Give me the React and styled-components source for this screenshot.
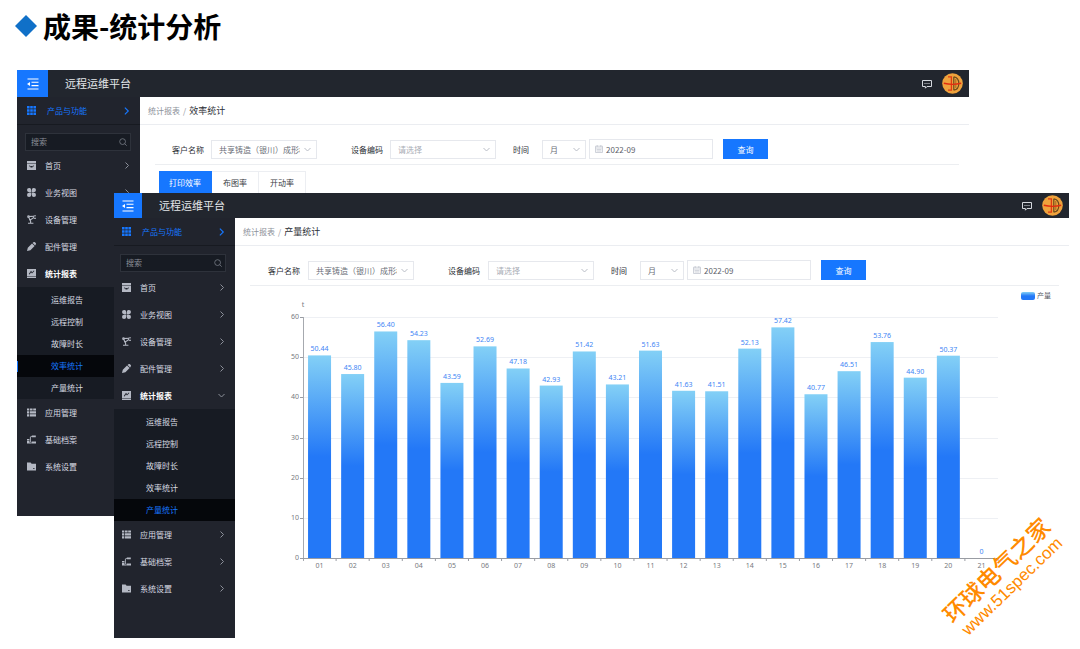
import React, { useId } from 'react';
import styled, { createGlobalStyle, css } from 'styled-components';

const GlobalStyle = createGlobalStyle`
    * {
        box-sizing: border-box;
    }
    body {
        margin: 0;
        background: #ffffff;
        font-family: 'Noto Sans CJK SC', sans-serif;
    }
    button, input, select {
        font-family: inherit;
    }
    a {
        color: inherit;
        text-decoration: none;
    }
`;

const Slide = styled.main`
    position: relative;
    min-height: 100vh;
    overflow: hidden;
    padding: 6px 11px 0 17px;
`;

const SlideTitle = styled.h1`
    display: flex;
    align-items: center;
    gap: 6px;
    height: 40px;
    margin: 0 0 24px;
    font-size: 28px;
    font-weight: 700;
    line-height: 40px;
    color: #000000;

    svg {
        flex: none;
        width: 22px;
        height: 22px;
        margin-left: -2px;
    }
`;

const Stage = styled.div`
    display: grid;
    grid-template-columns: minmax(0, 1fr);
    align-items: start;
`;

const Window = styled.section`
    grid-area: 1 / 1;
    background: #ffffff;
    margin: ${(p) => (p.$front ? '123px 0 0 97px' : '0 100px 0 0')};
`;

const TopBar = styled.header`
    display: flex;
    align-items: center;
    height: ${(p) => (p.$front ? 25 : 27)}px;
    padding-right: 6px;
    background: #22262e;
    color: #e4e6ea;
`;

const Toggle = styled.button`
    display: flex;
    align-items: center;
    justify-content: center;
    width: ${(p) => (p.$front ? 28 : 31)}px;
    height: 100%;
    padding: 0;
    border: 0;
    background: #1677ff;
    color: #ffffff;
`;

const AppName = styled.h2`
    flex: 1;
    margin: 0 0 0 17px;
    padding-bottom: 2px;
    font-size: 11px;
    font-weight: 400;
    line-height: 16px;
`;

const IconButton = styled.button`
    display: flex;
    margin: 2px 10px 0 0;
    padding: 0;
    border: 0;
    background: none;
    color: #d5d8de;
`;

const Body = styled.div`
    display: grid;
    grid-template-columns: ${(p) => (p.$front ? 121 : 123)}px minmax(0, 1fr);
`;

const Sidebar = styled.nav`
    padding-bottom: 36px;
    background: #21242d;
    color: #d8dbe2;
    font-size: 8px;
    line-height: 12px;
`;

const row = css`
    display: flex;
    align-items: center;
    padding: 0 10px 0 ${(p) => (p.$front ? 8 : 10)}px;
`;

const Product = styled.a`
    ${row}
    gap: 11px;
    height: 28px;
    border-bottom: 1px solid #171a21;
    color: #1677ff;

    span {
        flex: 1;
    }
`;

const Search = styled.label`
    display: flex;
    align-items: center;
    height: 18px;
    margin: ${(p) => (p.$front ? '8px 9px 2px 6px' : '8px 9px 1px 8px')};
    padding: 0 3px 0 5px;
    border: 1px solid #2e323b;
    background: #171b23;
    color: #777c86;

    input {
        flex: 1;
        min-width: 0;
        padding: 0;
        border: 0;
        outline: 0;
        background: none;
        color: #d8dbe2;
        font-size: 8px;
        line-height: 12px;
    }
    input::placeholder {
        color: #8b8f98;
    }
`;

const MenuItem = styled.a`
    ${row}
    gap: 9px;
    height: 27px;
    font-weight: ${(p) => (p.$open ? 700 : 400)};
    color: ${(p) => (p.$open ? '#ffffff' : '#d8dbe2')};

    span {
        flex: 1;
    }
    svg:first-child {
        color: #b4b8c3;
    }
    svg:last-child {
        color: #8c909a;
    }
`;

const SubMenu = styled.div`
    padding-top: 2px;
    background: #171b23;
`;

const SubItem = styled.a`
    display: flex;
    align-items: center;
    height: 22px;
    padding-left: ${(p) => (p.$front ? 32 : 34)}px;

    ${(p) =>
        p.$active &&
        css`
            background: #05070b;
            color: #1677ff;
        `}
    ${(p) =>
        p.$active &&
        !p.$front &&
        css`
            background: linear-gradient(#1677ff, #1677ff) 0 50% / 1px 11px no-repeat #05070b;
        `}
`;

const Content = styled.div`
    min-width: 0;
`;

const Crumbs = styled.div`
    display: flex;
    align-items: center;
    gap: 3px;
    height: 28px;
    padding-left: 8px;
    border-bottom: 1px solid #ebedf1;
    font-size: 8px;
    color: #8d919a;

    strong {
        font-size: 9px;
        font-weight: 400;
        color: #2c2f36;
    }
`;

const Filters = styled.form`
    display: flex;
    align-items: center;
    height: 40px;
    margin: 0 10px 0 15px;
    padding: 9px 0 0 ${(p) => (p.$front ? 18 : 17)}px;
    border-bottom: 1px solid #eceef1;
    font-size: 8px;
    color: #2c2f36;
`;

const Field = styled.div`
    display: flex;
    align-items: center;
    gap: ${(p) => p.$gap}px;
    margin-right: ${(p) => p.$after}px;

    label {
        white-space: nowrap;
    }
`;

const SelectBox = styled.span`
    display: grid;
    align-items: center;
    width: ${(p) => p.$width}px;
    height: 19px;
    border: 1px solid #e6e8ed;
    background: #ffffff;
    color: #b9bdc6;

    select {
        grid-area: 1 / 1;
        appearance: none;
        width: 100%;
        height: 17px;
        padding: 0 16px 0 7px;
        border: 0;
        outline: 0;
        background: none;
        font-size: 8px;
        color: ${(p) => (p.$empty ? '#a9adb6' : '#6a6e77')};
    }
    svg {
        grid-area: 1 / 1;
        justify-self: end;
        margin-right: 5px;
        pointer-events: none;
    }
`;

const DateBox = styled.span`
    display: flex;
    align-items: center;
    gap: 3px;
    width: 124px;
    height: 20px;
    margin: 0 10px 0 3px;
    padding: 0 5px;
    border: 1px solid #e6e8ed;
    color: #c3c7d0;

    input {
        flex: 1;
        min-width: 0;
        padding: 0;
        border: 0;
        outline: 0;
        font-size: 8px;
        color: #5d616a;
    }
`;

const Submit = styled.button`
    width: 45px;
    height: 20px;
    padding: 0;
    border: 0;
    background: #1677ff;
    color: #ffffff;
    font-size: 8px;
`;

const Tabs = styled.div`
    display: flex;
    margin: 6px 0 0 19px;
`;

const Tab = styled.button`
    width: ${(p) => (p.$active ? 53 : 47)}px;
    height: 23px;
    padding: 0;
    border: 1px solid #eceef2;
    border-left: 0;
    background: #ffffff;
    color: #3a3d44;
    font-size: 8px;

    ${(p) =>
        p.$active &&
        css`
            border-color: #1677ff;
            background: #1677ff;
            color: #ffffff;
        `}
`;

const ChartSvg = styled.svg`
    display: block;
    width: 100%;
    height: auto;
    font-family: 'Noto Sans', sans-serif;
    font-size: 7px;
`;

const Watermark = styled.div`
    position: absolute;
    right: 4px;
    top: 554px;
    width: 144px;
    color: #ff8a00;
    font-size: 23px;
    line-height: 24px;
    text-align: center;
    white-space: nowrap;
    transform: rotate(-44deg);

    a {
        display: block;
        font-family: 'Liberation Sans', sans-serif;
        font-size: 17px;
    }
    span {
        display: block;
        font-weight: 500;
    }
`;

const GLYPHS = {
    grid: <path d="M0 0h2.6v2.6H0zM3.2 0h2.6v2.6H3.2zM6.4 0H9v2.6H6.4zM0 3.2h2.6v2.6H0zM3.2 3.2h2.6v2.6H3.2zM6.4 3.2H9v2.6H6.4zM0 6.4h2.6V9H0zM3.2 6.4h2.6V9H3.2zM6.4 6.4H9V9H6.4z" />,
    home: <path fillRule="evenodd" d="M0 0h9v2.4H0zM0 3h9v6H0zM2.2 4.6v1h1.3v.8h2v-.8h1.3v-1h-.9v.5H3.1v-.5z" />,
    views: <path d="M2.1 0A2 2 0 0 1 4.2 2.1V4.2H2.1A2.1 2.1 0 0 1 2.1 0zM6.9 0a2.1 2.1 0 0 1 0 4.2H4.8V2.1A2 2 0 0 1 6.9 0zM2.1 4.8h2.1v2.1A2.1 2.1 0 1 1 2.1 4.8zM4.8 4.8h2.1a2.1 2.1 0 1 1-2.1 2.1z" />,
    robot: (
        <g fill="none" stroke="currentColor" strokeWidth="1.1">
            <path d="M1 8.3h5.4M3.6 8V5.800L1.600 2.200M1.500 1.500 5.800 1.200M8.900.8 6.800 1 6.200 2l.8 1.200 1.900.2M2.400 5.400l3.600-2.200" />
            <circle cx="1.500" cy="1.700" r=".8" />
        </g>
    ),
    pen: <path d="M0 9l.8-3.2L5 1.6l2.6 2.4-4.2 4.2zM5.6 1 6.4.3a1.2 1.2 0 0 1 1.6 0l.7.7a1.2 1.2 0 0 1 0 1.6l-.6.8z" />,
    report: <path fillRule="evenodd" d="M0 0h9v7H0zM0 7.6h9V9H0zM1.8 5l.9.4L4 3.2l1 1.4L7.4 2l-.6-.5-1.6 1.8-1.2-1.6z" />,
    list: <path d="M0 .4h2v2.200H0zM2.700.4H5.600v2.200H2.700zM6.200.4H9v2.200H6.200zM0 3.300h2v2.200H0zM2.700 3.300H9v2.200H2.700zM0 6.200h2v2.200H0zM2.700 6.200H9v2.200H2.700z" />,
    archive: <path d="M4.800.4H8.800v1.800H4.800zM3.600 1h1v1h-1zM2.900 2h.9v5h-.9zM0 4h2.400v1H0zM0 5.600h2.400v2.800H0zM4.600 6.600H9v1.800H4.600zM2.400 7.400h2v1h-2z" />,
    folder: <path fillRule="evenodd" d="M0 .5h3.6l1 1.3H9V8.6H0zM6 6.2v.9h1.6v-.9z" />,
};

const Glyph = ({ name }) => (
    <svg width="9" height="9" viewBox="0 0 9 9" fill="currentColor" aria-hidden="true">
        {GLYPHS[name]}
    </svg>
);

const Chevron = ({ down, size = 7 }) => (
    <svg width={size} height={size} viewBox="0 0 7 7" fill="none" stroke="currentColor" aria-hidden="true">
        <path d={down ? 'M.5 2l3 3 3-3' : 'M2.5.5l3 3-3 3'} />
    </svg>
);

const MagnifierIcon = () => (
    <svg width="8" height="8" viewBox="0 0 8 8" fill="none" stroke="currentColor" strokeWidth=".8" aria-hidden="true">
        <circle cx="3.6" cy="3.6" r="2.9" />
        <path d="M5.7 5.7 7.7 7.7" />
    </svg>
);

const FoldIcon = () => (
    <svg width="12" height="12" viewBox="0 0 12 12" fill="none" stroke="currentColor" strokeWidth="1.1" aria-hidden="true">
        <path d="M.5 1h11M4.5 4.3h7M4.5 7.6h7M.5 11h11" />
        <path d="M0 6l3-2v4z" fill="currentColor" stroke="none" />
    </svg>
);

const MessageIcon = () => (
    <svg width="10" height="9" viewBox="0 0 10 9" fill="none" stroke="currentColor" aria-hidden="true">
        <path d="M.5.5h9v6H5L3.4 8.2V6.5H.5z" />
        <path d="M2.5 3.5h1M4.5 3.5h1M6.5 3.5h1" />
    </svg>
);

const CalendarIcon = () => (
    <svg width="8" height="8" viewBox="0 0 8 8" fill="none" stroke="currentColor" strokeWidth=".8" aria-hidden="true">
        <path d="M.5 1.2h7v6.3h-7zM.5 3h7M2.2 0v2M5.8 0v2M1.5 4.6h5M1.5 6h5" />
    </svg>
);

const Avatar = () => (
    <svg width="21" height="21" viewBox="0 0 21 21" fill="none" role="img" aria-label="用户">
        <circle cx="10.5" cy="10.5" r="10.3" fill="#efa23c" />
        <path d="M11.8 3.8v13.400M11.800 3.800c3.500.4 5 3.200 5 6.700s-1.500 6.300-5 6.700" stroke="#6b4a1c" strokeWidth="1.200" />
        <path d="M13.800 6v9" stroke="#8a5a20" strokeWidth=".8" />
        <path d="M6 3.800h3.400v13.400H6" stroke="#e03a14" strokeWidth="1.300" />
        <path d="M1.800 10.200c5 1.300 12.500 1.300 17.400 0" stroke="#e02d10" strokeWidth="1.400" />
    </svg>
);

const MENU = [
    { icon: 'home', label: '首页' },
    { icon: 'views', label: '业务视图' },
    { icon: 'robot', label: '设备管理' },
    { icon: 'pen', label: '配件管理' },
    {
        icon: 'report',
        label: '统计报表',
        children: ['运维报告', '远程控制', '故障时长', '效率统计', '产量统计'],
    },
    { icon: 'list', label: '应用管理' },
    { icon: 'archive', label: '基础档案' },
    { icon: 'folder', label: '系统设置' },
];

const OUTPUT = [
    50.44, 45.8, 56.4, 54.23, 43.59, 52.69, 47.18, 42.93, 51.42, 43.21, 51.63,
    41.63, 41.51, 52.13, 57.42, 40.77, 46.51, 53.76, 44.9, 50.37, 0,
];

const PLOT = { left: 68, right: 763, top: 31, bottom: 272 };

function OutputChart() {
    const band = (PLOT.right - PLOT.left) / OUTPUT.length;
    const y = (v) => PLOT.bottom - (v / 60) * (PLOT.bottom - PLOT.top);

    return (
        <ChartSvg viewBox="0 0 834 310" role="img" aria-label="产量">
            <defs>
                <linearGradient id="bar" x1="0" y1="0" x2="0" y2="1">
                    <stop offset="0" stopColor="#83d0f6" />
                    <stop offset="0.5" stopColor="#2378f7" />
                    <stop offset="1" stopColor="#2378f7" />
                </linearGradient>
            </defs>
            <rect x="786" y="6" width="14" height="8" rx="2" fill="url(#bar)" />
            <text x="802" y="12" fill="#55585f" fontFamily="Noto Sans CJK SC, sans-serif">
                产量
            </text>
            <text x={PLOT.left} y="21" textAnchor="middle" fill="#777a80">
                t
            </text>
            {[0, 10, 20, 30, 40, 50, 60].map((v) => (
                <g key={v}>
                    {v > 0 && (
                        <path
                            d={`M${PLOT.left} ${Math.round(y(v)) + 0.5}H${PLOT.right}`}
                            stroke="#eef0f4"
                        />
                    )}
                    <path d={`M${PLOT.left - 3} ${Math.round(y(v)) + 0.5}h3`} stroke="#999ca3" />
                    <text x={PLOT.left - 4} y={y(v) + 2} textAnchor="end" fill="#777a80">
                        {v}
                    </text>
                </g>
            ))}
            {OUTPUT.map((v, i) => {
                const mid = PLOT.left + band * (i + 0.5);
                return (
                    <g key={i}>
                        {v > 0 && (
                            <rect
                                x={mid - 11.5}
                                y={y(v)}
                                width="23"
                                height={PLOT.bottom - y(v)}
                                fill="url(#bar)"
                            />
                        )}
                        <text x={mid} y={y(v) - 4} textAnchor="middle" fill="#4286f5">
                            {v ? v.toFixed(2) : 0}
                        </text>
                        <text x={mid} y="282" textAnchor="middle" fill="#777a80">
                            {String(i + 1).padStart(2, '0')}
                        </text>
                        <path d={`M${mid + band / 2} 272v3`} stroke="#999ca3" />
                    </g>
                );
            })}
            <path d="M68.5 31V275" stroke="#a6a9af" />
            <path d="M68 272.5H763" stroke="#999ca3" />
        </ChartSvg>
    );
}

function FilterBar({ front }) {
    const id = useId();
    const gap = front ? 8 : 7;

    return (
        <Filters $front={front} onSubmit={(e) => e.preventDefault()}>
            <Field $gap={gap} $after={34}>
                <label htmlFor={`${id}customer`}>客户名称</label>
                <SelectBox $width={106}>
                    <select id={`${id}customer`}>
                        <option>共享铸造（银川）成形机</option>
                    </select>
                    <Chevron down />
                </SelectBox>
            </Field>
            <Field $gap={gap} $after={17}>
                <label htmlFor={`${id}device`}>设备编码</label>
                <SelectBox $width={106} $empty>
                    <select id={`${id}device`}>
                        <option>请选择</option>
                    </select>
                    <Chevron down />
                </SelectBox>
            </Field>
            <Field $gap={13} $after={0}>
                <label htmlFor={`${id}unit`}>时间</label>
                <SelectBox $width={44}>
                    <select id={`${id}unit`}>
                        <option>月</option>
                    </select>
                    <Chevron down />
                </SelectBox>
            </Field>
            <DateBox>
                <CalendarIcon />
                <input aria-label="月份" defaultValue="2022-09" />
            </DateBox>
            <Submit>查询</Submit>
        </Filters>
    );
}

function PlatformWindow({ page, front, children }) {
    return (
        <Window $front={front}>
            <TopBar $front={front}>
                <Toggle $front={front} aria-label="收起菜单">
                    <FoldIcon />
                </Toggle>
                <AppName>远程运维平台</AppName>
                <IconButton aria-label="消息">
                    <MessageIcon />
                </IconButton>
                <Avatar />
            </TopBar>
            <Body $front={front}>
                <Sidebar>
                    <Product href="#" $front={front}>
                        <Glyph name="grid" />
                        <span>产品与功能</span>
                        <Chevron size={8} />
                    </Product>
                    <Search $front={front}>
                        <input aria-label="搜索" placeholder="搜索" />
                        <MagnifierIcon />
                    </Search>
                    {MENU.map((item) => (
                        <React.Fragment key={item.label}>
                            <MenuItem href="#" $front={front} $open={!!item.children}>
                                <Glyph name={item.icon} />
                                <span>{item.label}</span>
                                <Chevron down={!!item.children} />
                            </MenuItem>
                            {item.children && (
                                <SubMenu>
                                    {item.children.map((child) => (
                                        <SubItem
                                            key={child}
                                            href="#"
                                            $front={front}
                                            $active={child === page}
                                        >
                                            {child}
                                        </SubItem>
                                    ))}
                                </SubMenu>
                            )}
                        </React.Fragment>
                    ))}
                </Sidebar>
                <Content>
                    <Crumbs>
                        <a href="#">统计报表</a>
                        <span>/</span>
                        <strong>{page}</strong>
                    </Crumbs>
                    <FilterBar front={front} />
                    {children}
                </Content>
            </Body>
        </Window>
    );
}

function App() {
    return (
        <Slide>
            <GlobalStyle />
            <SlideTitle>
                <svg viewBox="0 0 22 22" aria-hidden="true">
                    <path d="M11 0l11 11-11 11L0 11z" fill="#1070c8" />
                </svg>
                成果-统计分析
            </SlideTitle>
            <Stage>
                <PlatformWindow page="效率统计">
                    <Tabs>
                        <Tab $active>打印效率</Tab>
                        <Tab>布图率</Tab>
                        <Tab>开动率</Tab>
                    </Tabs>
                </PlatformWindow>
                <PlatformWindow page="产量统计" front>
                    <OutputChart />
                </PlatformWindow>
            </Stage>
            <Watermark>
                <span>环球电气之家</span>
                <a href="#">www.51spec.com</a>
            </Watermark>
        </Slide>
    );
}

export default App;
